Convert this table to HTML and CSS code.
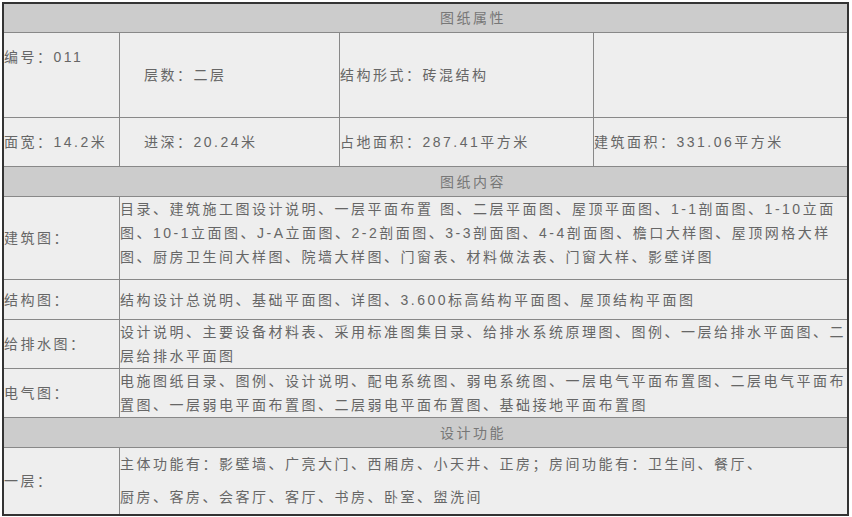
FILE: index.html
```html
<!DOCTYPE html>
<html lang="zh-CN">
<head>
<meta charset="utf-8">
<title>图纸属性</title>
<link rel="stylesheet" href="styles.css">
</head>
<body>
<div class="sheet">
  <div class="head h1">图纸属性</div>

  <div class="cell top r1">编号：011</div>
  <div class="cell mid r1 pad">层数：二层</div>
  <div class="cell mid r1">结构形式：砖混结构</div>
  <div class="cell mid r1 last"></div>

  <div class="cell mid r2">面宽：14.2米</div>
  <div class="cell mid r2 pad">进深：20.24米</div>
  <div class="cell mid r2">占地面积：287.41平方米</div>
  <div class="cell mid r2 last">建筑面积：331.06平方米</div>

  <div class="head h2">图纸内容</div>

  <div class="cell mid label r-jz">建筑图：</div>
  <div class="cell content r-jz jz">目录、建筑施工图设计说明、一层平面布置 图、二层平面图、屋顶平面图、1-1剖面图、1-10立面<br>图、10-1立面图、J-A立面图、2-2剖面图、3-3剖面图、4-4剖面图、檐口大样图、屋顶网格大样<br>图、厨房卫生间大样图、院墙大样图、门窗表、材料做法表、门窗大样、影壁详图</div>

  <div class="cell mid label r-jg">结构图：</div>
  <div class="cell content r-jg">结构设计总说明、基础平面图、详图、3.600标高结构平面图、屋顶结构平面图</div>

  <div class="cell mid label r-gp">给排水图：</div>
  <div class="cell content r-gp">设计说明、主要设备材料表、采用标准图集目录、给排水系统原理图、图例、一层给排水平面图、二<br>层给排水平面图</div>

  <div class="cell mid label r-dq">电气图：</div>
  <div class="cell content r-dq">电施图纸目录、图例、设计说明、配电系统图、弱电系统图、一层电气平面布置图、二层电气平面布<br>置图、一层弱电平面布置图、二层弱电平面布置图、基础接地平面布置图</div>

  <div class="head h3">设计功能</div>

  <div class="cell mid label r-yc final">一层：</div>
  <div class="cell content r-yc yc final">主体功能有：影壁墙、广亮大门、西厢房、小天井、正房；房间功能有：卫生间、餐厅、<br>厨房、客房、会客厅、客厅、书房、卧室、盥洗间</div>
</div>
</body>
</html>
```

FILE: styles.css
```css
* {
  box-sizing: border-box;
}

html, body {
  margin: 0;
  padding: 0;
  background: #ffffff;
}

body {
  padding: 2px 0 0 2px;
}

.sheet {
  width: 847px;
  border: 2px solid #333333;
  display: grid;
  grid-template-columns: 116px 220px 254px 1fr;
  grid-template-rows: 29px 85px 49px 30px 83px 40px 49px 49px 30px 66px;
  background: #eeeeee;
  font-family: "Liberation Sans", "Noto Sans CJK SC", sans-serif;
  font-size: 14px;
  letter-spacing: 2.5px;
  color: #666666;
  line-height: 24px;
}

.head {
  grid-column: 1 / -1;
  background: #cccccc;
  border-bottom: 1px solid #888888;
  display: flex;
  align-items: center;
  justify-content: center;
  padding-left: 95px;
  color: #777777;
}

.cell {
  border-right: 1px solid #888888;
  border-bottom: 1px solid #888888;
  white-space: nowrap;
}

.cell.last,
.cell.content {
  border-right: none;
}

.cell.final {
  border-bottom: none;
}

.top {
  padding-top: 12px;
}

.mid {
  display: flex;
  align-items: center;
}

.pad {
  padding-left: 24px;
}

.content {
  grid-column: 2 / -1;
  display: flex;
  align-items: center;
}

.jz {
  align-items: flex-start;
  padding-top: 0;
}

.yc {
  line-height: 33px;
}
```
